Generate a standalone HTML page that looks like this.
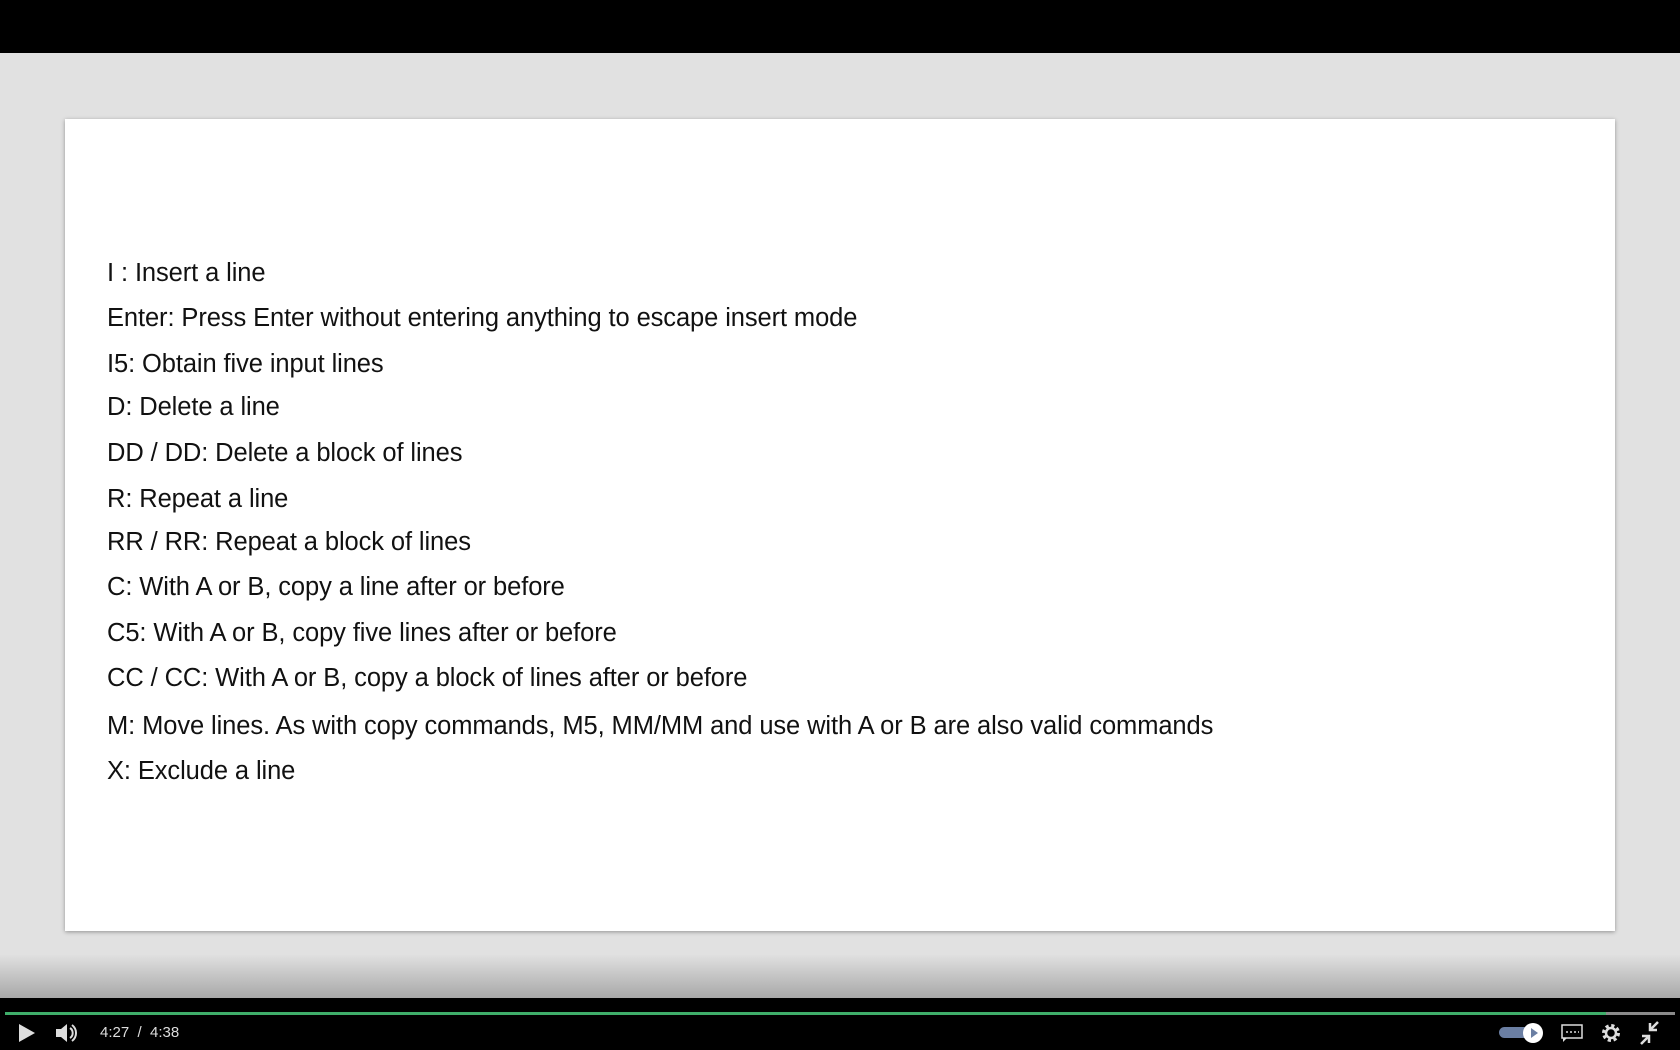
<!DOCTYPE html>
<html><head><meta charset="utf-8"><style>
*{margin:0;padding:0;box-sizing:border-box}
body{width:1680px;height:1050px;overflow:hidden;background:#e1e1e1;font-family:"Liberation Sans",sans-serif;position:relative}
#top{position:absolute;left:0;top:0;width:1680px;height:53px;background:#000}
#card{position:absolute;left:65px;top:119px;width:1550px;height:812px;background:#fff;box-shadow:0 1px 4px rgba(0,0,0,.35)}
.l{position:absolute;left:107px;font-size:25.5px;color:#111;white-space:nowrap;line-height:30px;letter-spacing:-0.1px}
#grad{position:absolute;left:0;top:955px;width:1680px;height:43px;background:linear-gradient(#e0e0e0,#a8a8a8)}
#bar{position:absolute;left:0;top:998px;width:1680px;height:52px;background:#000}
#prog{position:absolute;left:5px;top:1012px;width:1670px;height:3px;background:#8a8a8a}
#prog div{width:1601px;height:3px;background:#3fae6a}
.t{position:absolute;top:1024px;color:#ddd;font-size:15px}
</style></head><body>
<div id="top"></div>
<div id="card"></div>
<div class="l" style="top:258px">I : Insert a line</div>
<div class="l" style="top:303px">Enter: Press Enter without entering anything to escape insert mode</div>
<div class="l" style="top:349px">I5: Obtain five input lines</div>
<div class="l" style="top:392px">D: Delete a line</div>
<div class="l" style="top:438px">DD / DD: Delete a block of lines</div>
<div class="l" style="top:484px">R: Repeat a line</div>
<div class="l" style="top:527px">RR / RR: Repeat a block of lines</div>
<div class="l" style="top:572px">C: With A or B, copy a line after or before</div>
<div class="l" style="top:618px">C5: With A or B, copy five lines after or before</div>
<div class="l" style="top:663px">CC / CC: With A or B, copy a block of lines after or before</div>
<div class="l" style="top:711px">M: Move lines. As with copy commands, M5, MM/MM and use with A or B are also valid commands</div>
<div class="l" style="top:756px">X: Exclude a line</div>
<div id="grad"></div>
<div id="bar"></div>
<div id="prog"><div></div></div>
<svg style="position:absolute;left:0;top:1015px" width="1680" height="35">
<path d="M19 9 L35 18 L19 27Z" fill="#ddd"/>
<path d="M56 14h5l6-5v18l-6-5h-5z" fill="#ddd"/>
<path d="M70 13a6 6 0 0 1 0 10M72 10a10 10 0 0 1 0 16" stroke="#ddd" stroke-width="2" fill="none"/>
<rect x="1499" y="12" width="36" height="11" rx="5.5" fill="#6b7fa3"/>
<circle cx="1533" cy="18" r="10" fill="#fff"/>
<path d="M1531 13l7 5-7 5z" fill="#6b7fa3"/>
<rect x="1562" y="10" width="20" height="13" fill="none" stroke="#ddd" stroke-width="1.5"/>
<path d="M1563 23v4l4-4" fill="#ddd"/>
<path d="M1566 17h2M1570 17h2M1574 17h2M1578 17h1" stroke="#ddd" stroke-width="1.5"/>
<circle cx="1611" cy="18" r="7" fill="none" stroke="#ddd" stroke-width="4" stroke-dasharray="3 2.5"/>
<circle cx="1611" cy="18" r="5" fill="none" stroke="#ddd" stroke-width="2.5"/>
<path d="M1658 7l-7 7M1650 8v7h7M1641 29l7-7M1649 28v-7h-7" stroke="#ddd" stroke-width="2.5" fill="none"/>
</svg>
<div class="t" style="left:100px">4:27&nbsp;&nbsp;/&nbsp;&nbsp;4:38</div>
</body></html>
